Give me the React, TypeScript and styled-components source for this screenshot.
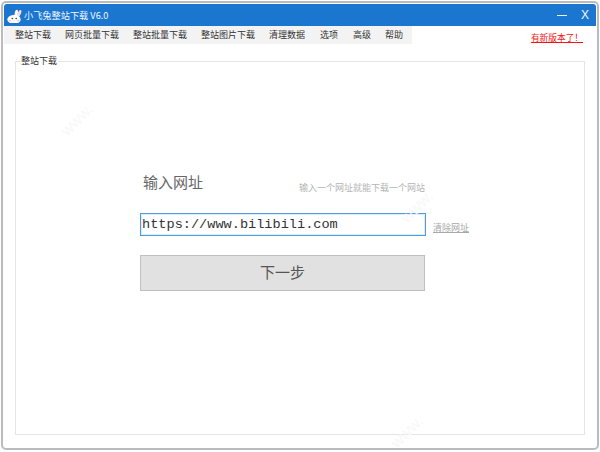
import { FC } from "react";
import styled, { createGlobalStyle } from "styled-components";

const CJK = `"Noto Sans CJK SC", "Liberation Sans", sans-serif`;

const GlobalStyle = createGlobalStyle`
	html, body {
		margin: 0;
		padding: 0;
		background: #ffffff;
	}
`;

const Page = styled.div`
	box-sizing: border-box;
	width: 600px;
	height: 452px;
	padding: 1px;
	background: #ffffff;
	overflow: hidden;
`;

const Window = styled.div`
	position: relative;
	box-sizing: border-box;
	width: 598px;
	height: 449px;
	display: flex;
	flex-direction: column;
	padding: 1px;
	background: #ffffff;
	border: 2px solid #b9bcbe;
	border-radius: 5px;
	overflow: hidden;
	font-family: ${CJK};
`;

const TitleBar = styled.div`
	flex: none;
	height: 22px;
	display: flex;
	align-items: center;
	padding: 0 7px 0 2px;
	background: #1b76cf;
	border-radius: 3px 3px 0 0;
	color: #f2f7fc;
	overflow: hidden;
`;

const TitleText = styled.span`
	margin-left: 2px;
	font-size: 9.2px;
`;

const WindowButtons = styled.div`
	margin-left: auto;
	display: flex;
	align-items: center;
	gap: 14px;
`;

const MinButton = styled.span`
	display: block;
	width: 10px;
	height: 1px;
	background: #e8f1fa;
`;

const CloseButton = styled.span`
	font-family: "Liberation Sans", sans-serif;
	font-size: 12px;
	line-height: 12px;
	color: #f2f7fc;
`;

const MenuRow = styled.div`
	flex: none;
	height: 18px;
	display: flex;
	align-items: center;
	justify-content: space-between;
`;

const MenuBar = styled.div`
	width: 408px;
	height: 18px;
	display: flex;
	align-items: center;
	padding-left: 11px;
	box-sizing: border-box;
	background: #f3f3f3;
`;

const MenuItem = styled.span<{ $width: number }>`
	width: ${(props) => props.$width}px;
	flex: none;
	font-size: 9px;
	line-height: 18px;
	color: #333333;
`;

const UpdateLink = styled.a`
	margin: 5px 13px 0 0;
	font-size: 8.7px;
	line-height: 12px;
	color: #f01414;
	text-decoration: underline;
`;

const GroupBox = styled.fieldset`
	box-sizing: border-box;
	flex: none;
	width: 570px;
	height: 380px;
	margin: 11px 0 0 11px;
	padding: 0;
	border: 1px solid #e4e4e4;
	min-inline-size: 0;
`;

const GroupTitle = styled.legend`
	margin-left: 4px;
	padding: 0 1px;
	font-size: 9px;
	line-height: 12px;
	color: #333333;
`;

const Form = styled.div`
	margin: 105px 0 0 124px;
	display: flex;
	flex-direction: column;
	align-items: flex-start;
`;

const HeadingRow = styled.div`
	width: 285px;
	height: 41px;
	display: flex;
	align-items: flex-start;
	justify-content: space-between;
	padding-left: 3px;
	box-sizing: border-box;
`;

const Heading = styled.h2`
	margin: 0;
	font-family: "Noto Sans CJK SC", serif;
	font-size: 15px;
	line-height: 20px;
	font-weight: 400;
	color: #666666;
`;

const Hint = styled.span`
	margin-top: 10px;
	font-size: 9px;
	line-height: 12px;
	color: #b4b4b4;
`;

const InputRow = styled.div`
	display: flex;
	align-items: center;
	gap: 7px;
`;

const UrlInput = styled.input`
	box-sizing: border-box;
	width: 286px;
	height: 23px;
	padding: 0 0 1px 1px;
	border: 1px solid #4e9de0;
	box-shadow: inset 0 0 0 1px rgba(90, 165, 230, 0.2);
	outline: none;
	background: #ffffff;
	font-family: "Liberation Mono", monospace;
	font-size: 13.6px;
	color: #333333;
`;

const ClearLink = styled.a`
	margin-top: 6px;
	font-size: 9px;
	line-height: 12px;
	color: #a8a8a8;
	text-decoration: underline;
`;

const NextButton = styled.button`
	box-sizing: border-box;
	width: 285px;
	height: 36px;
	margin-top: 19px;
	padding: 0 0 4px;
	border: 1px solid #c0c0c0;
	background: #e1e1e1;
	font-family: "Noto Sans CJK SC", serif;
	font-size: 15px;
	color: #555555;
`;

const Watermark = styled.span<{ $left: number; $top: number }>`
	position: absolute;
	left: ${(props) => props.$left}px;
	top: ${(props) => props.$top}px;
	font-family: "Liberation Sans", sans-serif;
	font-size: 16px;
	color: #f8f8f8;
	transform: rotate(-45deg);
	pointer-events: none;
`;

const RabbitIcon: FC = () => (
	<svg width="16" height="20" viewBox="0 0 18 22">
		<ellipse cx="11.5" cy="9.5" rx="1.8" ry="4.5" fill="#ffffff" transform="rotate(10 11.5 9.5)" />
		<ellipse cx="14.8" cy="9.5" rx="1.8" ry="4.5" fill="#f9dbe3" transform="rotate(24 14.8 9.5)" />
		<ellipse cx="9" cy="16" rx="7.5" ry="5" fill="#ffffff" />
		<circle cx="7" cy="15" r="0.9" fill="#333333" />
		<circle cx="11.5" cy="15" r="0.9" fill="#333333" />
		<ellipse cx="4.5" cy="17.5" rx="1.2" ry="0.8" fill="#f5b8c6" />
		<ellipse cx="13.5" cy="17.5" rx="1.2" ry="0.8" fill="#f5b8c6" />
		<rect x="0" y="20" width="18" height="2" fill="#1b76cf" />
	</svg>
);

const menuItems = [
	{ label: "整站下载", width: 50 },
	{ label: "网页批量下载", width: 68 },
	{ label: "整站批量下载", width: 68 },
	{ label: "整站图片下载", width: 68 },
	{ label: "清理数据", width: 51 },
	{ label: "选项", width: 33 },
	{ label: "高级", width: 32 },
	{ label: "帮助", width: 20 },
];

const App: FC = () => (
	<Page>
		<GlobalStyle />
		<Window>
			<TitleBar>
				<RabbitIcon />
				<TitleText>小飞兔整站下载 V6.0</TitleText>
				<WindowButtons>
					<MinButton />
					<CloseButton>X</CloseButton>
				</WindowButtons>
			</TitleBar>
			<MenuRow>
				<MenuBar>
					{menuItems.map((item) => (
						<MenuItem key={item.label} $width={item.width}>
							{item.label}
						</MenuItem>
					))}
				</MenuBar>
				<UpdateLink>有新版本了！</UpdateLink>
			</MenuRow>
			<GroupBox>
				<GroupTitle>整站下载</GroupTitle>
				<Form>
					<HeadingRow>
						<Heading>输入网址</Heading>
						<Hint>输入一个网址就能下载一个网站</Hint>
					</HeadingRow>
					<InputRow>
						<UrlInput defaultValue="https://www.bilibili.com" />
						<ClearLink>清除网址</ClearLink>
					</InputRow>
					<NextButton>下一步</NextButton>
				</Form>
			</GroupBox>
			<Watermark $left={55} $top={108}>www.</Watermark>
			<Watermark $left={395} $top={195}>www.</Watermark>
			<Watermark $left={385} $top={420}>www.</Watermark>
		</Window>
	</Page>
);

export default App;
